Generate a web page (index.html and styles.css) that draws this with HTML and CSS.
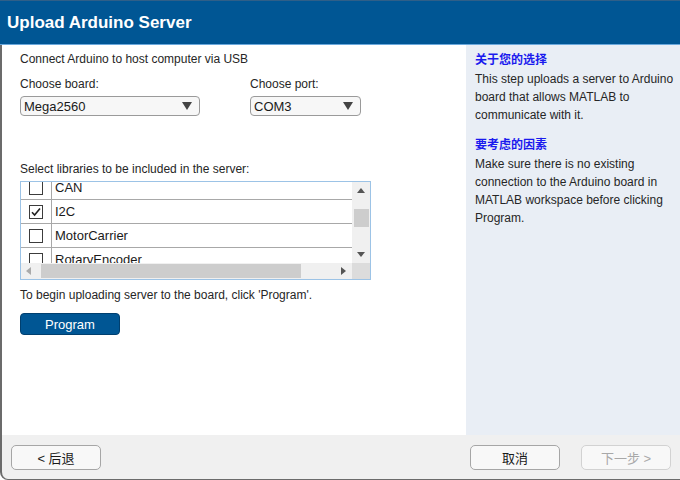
FILE: index.html
```html
<!DOCTYPE html>
<html>
<head>
<meta charset="utf-8">
<link rel="stylesheet" href="styles.css">
</head>
<body>
<div class="window">
  <div class="header"><span class="title">Upload Arduino Server</span></div>
  <div class="main">
    <div class="left">
      <div class="intro">Connect Arduino to host computer via USB</div>
      <div class="choosers">
        <div class="chooser board">
          <div class="label">Choose board:</div>
          <div class="select"><span>Mega2560</span>
            <svg class="caret" width="10" height="8" viewBox="0 0 10 8"><path d="M0 0H10L5 8Z" fill="#444"/></svg>
          </div>
        </div>
        <div class="chooser port">
          <div class="label">Choose port:</div>
          <div class="select"><span>COM3</span>
            <svg class="caret" width="10" height="8" viewBox="0 0 10 8"><path d="M0 0H10L5 8Z" fill="#444"/></svg>
          </div>
        </div>
      </div>
      <div class="libs-label">Select libraries to be included in the server:</div>
      <div class="listbox">
        <div class="list-top">
          <div class="viewport">
            <div class="rows">
              <div class="row"><div class="cb-cell"><span class="cb"></span></div><div class="name">CAN</div></div>
              <div class="row"><div class="cb-cell"><span class="cb"><svg width="12" height="12" viewBox="0 0 12 12"><path d="M2 6.2L4.6 9L10 2.6" fill="none" stroke="#222" stroke-width="1.6"/></svg></span></div><div class="name">I2C</div></div>
              <div class="row"><div class="cb-cell"><span class="cb"></span></div><div class="name">MotorCarrier</div></div>
              <div class="row"><div class="cb-cell"><span class="cb"></span></div><div class="name">RotaryEncoder</div></div>
            </div>
          </div>
          <div class="vscroll">
            <svg width="8" height="5" viewBox="0 0 8 5"><path d="M0 5H8L4 0Z" fill="#555"/></svg>
            <div class="vthumb"></div>
            <svg width="8" height="5" viewBox="0 0 8 5"><path d="M0 0H8L4 5Z" fill="#555"/></svg>
          </div>
        </div>
        <div class="list-bottom">
          <div class="hscroll">
            <svg width="5" height="8" viewBox="0 0 5 8"><path d="M5 0V8L0 4Z" fill="#aaa"/></svg>
            <div class="hthumb"></div>
            <svg width="5" height="8" viewBox="0 0 5 8"><path d="M0 0V8L5 4Z" fill="#555"/></svg>
          </div>
          <div class="corner"></div>
        </div>
      </div>
      <div class="hint">To begin uploading server to the board, click 'Program'.</div>
      <button class="program">Program</button>
    </div>
    <div class="right">
      <div class="h">关于您的选择</div>
      <p>This step uploads a server to Arduino board that allows MATLAB to communicate with it.</p>
      <div class="h h2">要考虑的因素</div>
      <p>Make sure there is no existing connection to the Arduino board in MATLAB workspace before clicking Program.</p>
    </div>
  </div>
  <div class="footer">
    <button class="btn">&lt; 后退</button>
    <div class="spacer"></div>
    <button class="btn">取消</button>
    <button class="btn disabled">下一步 &gt;</button>
  </div>
</div>
</body>
</html>
```
FILE: styles.css
```css
html, body {
  margin: 0;
  padding: 0;
  background: #ffffff;
}
body {
  font-family: "Liberation Sans", Arial, "Noto Sans CJK SC", sans-serif;
  font-size: 12px;
  color: #262626;
}
.window {
  width: 680px;
  height: 480px;
  display: flex;
  flex-direction: column;
  overflow: hidden;
}
.header {
  background: #005694;
  border-top: 1px solid #2f5f88;
  border-bottom: 1px solid #6aa8dc;
  display: flex;
  align-items: center;
  box-sizing: border-box;
  height: 45px;
}
.title {
  color: #ffffff;
  font-weight: bold;
  font-size: 17px;
  padding-left: 7px;
  padding-top: 1px;
}
.main {
  display: flex;
  height: 390px;
  border-left: 2px solid #6b6b6b;
}
.left {
  flex: 1;
  background: #ffffff;
  padding-left: 18px;
  box-sizing: border-box;
}
.intro {
  margin-top: 6px;
  line-height: 16px;
}
.choosers {
  display: flex;
  margin-top: 9px;
}
.chooser.board { width: 230px; }
.chooser.port { width: 111px; }
.label {
  line-height: 16px;
  height: 20px;
}
.select {
  height: 20px;
  box-sizing: border-box;
  border: 1px solid #9a9a9a;
  border-radius: 4px;
  background: #f7f7f7;
  display: flex;
  align-items: center;
  justify-content: space-between;
  padding: 0 7px 0 3px;
  font-size: 13px;
  color: #1a1a1a;
}
.board .select { width: 180px; }
.port .select { width: 111px; }
.libs-label {
  margin-top: 45px;
  line-height: 16px;
}
.listbox {
  margin-top: 4px;
  width: 351px;
  height: 99px;
  box-sizing: border-box;
  border: 1px solid #9cc3e6;
  display: flex;
  flex-direction: column;
}
.list-top {
  display: flex;
  height: 81px;
}
.viewport {
  flex: 1;
  overflow: hidden;
}
.rows {
  margin-top: -6px;
}
.row {
  display: flex;
  height: 24px;
  box-sizing: border-box;
  border-bottom: 1px solid #a8a8a8;
}
.cb-cell {
  width: 31px;
  box-sizing: border-box;
  border-right: 1px solid #a8a8a8;
  display: flex;
  align-items: center;
  padding-left: 8px;
}
.cb {
  width: 14px;
  height: 14px;
  box-sizing: border-box;
  border: 1px solid #3c3c3c;
  background: #fff;
  display: flex;
  align-items: center;
  justify-content: center;
}
.name {
  padding-left: 3px;
  font-size: 13px;
  line-height: 23px;
  color: #1a1a1a;
}
.vscroll {
  width: 18px;
  background: #f0f0f0;
  display: flex;
  flex-direction: column;
  align-items: center;
  padding-top: 6px;
  box-sizing: border-box;
}
.vthumb {
  width: 15px;
  height: 18px;
  background: #cdcdcd;
  margin-top: 16px;
  margin-bottom: 25px;
}
.list-bottom {
  display: flex;
  height: 16px;
}
.hscroll {
  flex: 1;
  background: #f0f0f0;
  display: flex;
  align-items: center;
  padding: 0 6px 0 5px;
}
.hthumb {
  width: 260px;
  height: 14px;
  background: #cdcdcd;
  margin: 0 auto 0 10px;
}
.corner {
  width: 18px;
  background: #dcdcdc;
}
.hint {
  margin-top: 7px;
  line-height: 16px;
}
.program {
  margin-top: 10px;
  width: 100px;
  height: 22px;
  border: 1px solid #003f6f;
  border-radius: 4px;
  background: #005694;
  color: #ffffff;
  font-family: "Liberation Sans", Arial, sans-serif;
  font-size: 13px;
  padding: 0;
}
.right {
  width: 214px;
  background: #e9eef5;
  padding: 6px 1px 0 9px;
  box-sizing: border-box;
  line-height: 18px;
}
.h {
  color: #1a1aee;
  font-weight: bold;
  font-family: "Noto Sans CJK SC", sans-serif;
  font-size: 12px;
  line-height: 16px;
}
.h2 { margin-top: 12px; }
.right p {
  margin: 3px 0 0 0;
  font-size: 12px;
  line-height: 18px;
  color: #262626;
}
.footer {
  height: 45px;
  background: #f0f0f0;
  border-left: 2px solid #6b6b6b;
  border-bottom: 1px solid #6b6b6b;
  border-bottom-left-radius: 8px;
  display: flex;
  align-items: center;
  padding: 0 9px 0 9px;
  box-sizing: border-box;
  gap: 21px;
}
.spacer { flex: 1; }
.btn {
  width: 90px;
  height: 25px;
  border: 1px solid #a6a6a6;
  border-radius: 5px;
  background: #f8f8f8;
  font-family: "Liberation Sans", Arial, "Noto Sans CJK SC", sans-serif;
  font-size: 13px;
  color: #1a1a1a;
  padding: 0;
}
.btn.disabled {
  color: #a8a8a8;
  border-color: #d2d2d2;
}
```
